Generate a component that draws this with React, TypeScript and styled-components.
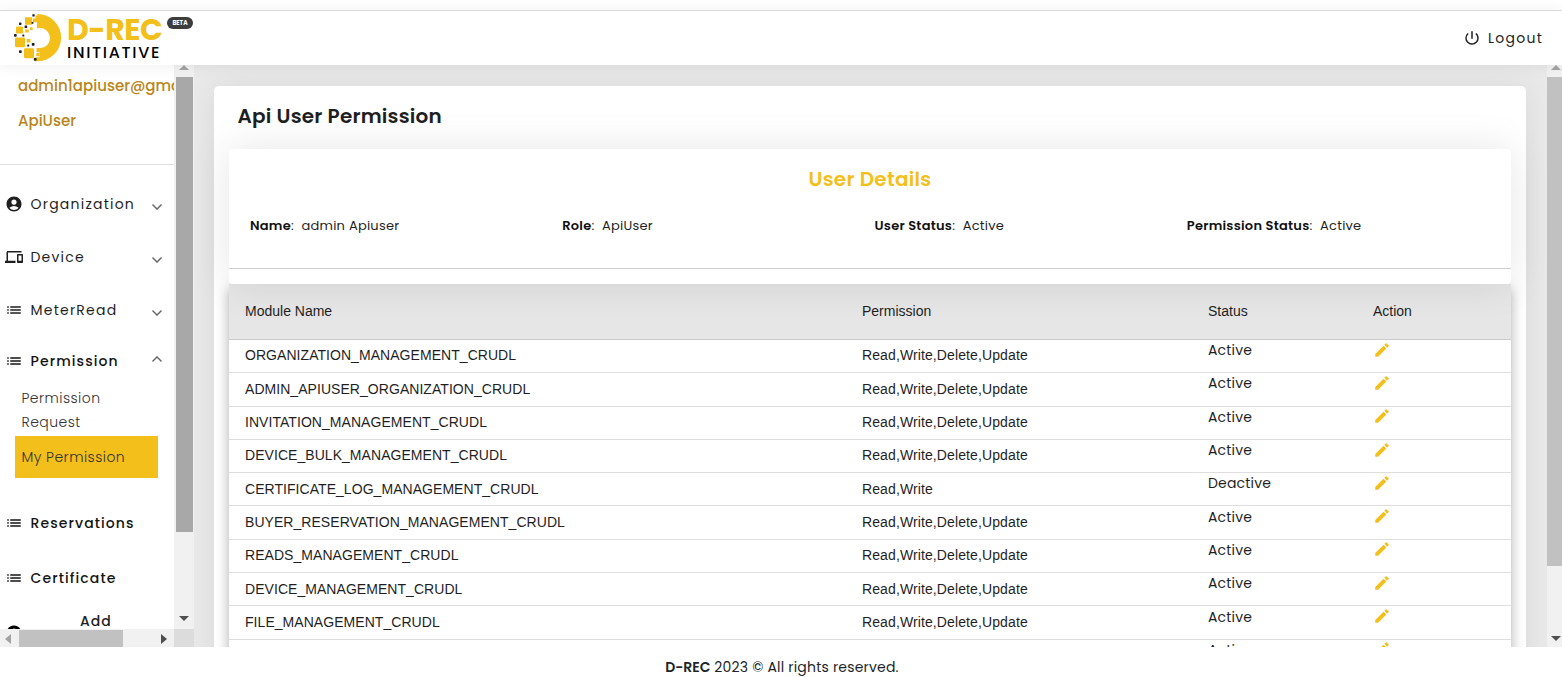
import React from 'react';
import styled, { createGlobalStyle } from 'styled-components';
import { MdAccountCircle, MdDevices, MdEdit, MdList, MdPowerSettingsNew } from 'react-icons/md';

const GlobalStyle = createGlobalStyle`
  *, *::before, *::after { box-sizing: border-box; }
  body {
    margin: 0;
    background: #fff;
    color: #1f1f1f;
    font-family: Poppins, Inter, 'Open Sans', sans-serif;
    overflow: hidden;
  }
`;

const GOLD = '#f3bf1a';

const Page = styled.div`
  display: flex;
  flex-direction: column;
  height: 677px;
  padding-top: 10px;
  overflow: hidden;
`;

const Header = styled.header`
  position: relative;
  z-index: 2;
  flex: none;
  display: flex;
  justify-content: space-between;
  height: 55px;
  padding: 0 19px 0 13px;
  background: #fff;
  border-top: 1px solid #dadada;
  box-shadow: 0 1px 14px rgba(0, 0, 0, 0.07);
`;

const Brand = styled.div`
  display: flex;
  align-items: flex-start;
`;

const BrandMark = styled.svg`
  display: block;
  width: 49px;
  height: 49px;
  margin-top: 2px;
`;

const BrandText = styled.div`
  display: flex;
  flex-direction: column;
  width: 99px;
  margin: 4px 0 0 5px;
  white-space: nowrap;
`;

const BrandName = styled.span`
  height: 30px;
  line-height: 30px;
  font-size: 30px;
  font-weight: 700;
  letter-spacing: -0.5px;
  color: ${GOLD};
`;

const BrandSub = styled.span`
  height: 16px;
  line-height: 16px;
  font-size: 16px;
  font-weight: 500;
  letter-spacing: 1.7px;
  color: #000;
`;

const Beta = styled.span`
  width: 26px;
  height: 12px;
  margin: 6px 0 0 1px;
  border-radius: 6px;
  background: #3d3d3d;
  color: #fff;
  font-size: 6px;
  font-weight: 700;
  line-height: 12px;
  text-align: center;
`;

const Logout = styled.div`
  display: flex;
  align-items: center;
  gap: 7px;
  height: 54px;
  font-size: 14px;
  letter-spacing: 1.25px;

  svg {
    width: 18px;
    height: 18px;
  }
`;

const Body = styled.div`
  flex: none;
  display: flex;
  height: 582px;
`;

const Sidebar = styled.aside`
  flex: none;
  display: grid;
  grid-template-columns: 174px 20px;
  grid-template-rows: 564px 18px;
  width: 194px;
  background: #fff;
`;

const SideContent = styled.div`
  overflow: hidden;
`;

const UserBlock = styled.div`
  display: flex;
  flex-direction: column;
  gap: 10px;
  height: 100px;
  padding: 8px 0 0 18px;
  border-bottom: 1px solid #dedede;
  color: #b8861b;
  font-size: 15px;
  font-weight: 500;
  line-height: 25px;
  white-space: nowrap;
`;

const Nav = styled.nav`
  display: flex;
  flex-direction: column;
  padding-top: 13px;
`;

const NavItem = styled.div<{ $h: number; $strong?: boolean }>`
  flex: none;
  display: flex;
  align-items: center;
  height: ${(p) => p.$h}px;
  padding: 0 12px 0 5px;
  color: ${(p) => (p.$strong ? '#141414' : '#1f1f1f')};
  font-size: 14px;
  font-weight: ${(p) => (p.$strong ? 500 : 400)};
  letter-spacing: ${(p) => (p.$strong ? 1.1 : 1.22)}px;
  white-space: nowrap;
`;

const NavIcon = styled.span`
  display: flex;
  margin: -1px 7.5px 0 0;

  svg {
    width: 18px;
    height: 18px;
  }
`;

const Chevron = styled.svg<{ $up?: boolean }>`
  width: 10px;
  height: 6px;
  margin: ${(p) => (p.$up ? '0 0 5px auto' : '5px 0 0 auto')};
  transform: ${(p) => (p.$up ? 'rotate(180deg)' : 'none')};
`;

const SubMenu = styled.div`
  display: flex;
  flex-direction: column;
  gap: 2px;
  padding: 0 16px 18px 15px;
  color: #333;
  font-size: 14px;
  font-weight: 300;
  letter-spacing: 0.45px;
`;

const SubItem = styled.div<{ $active?: boolean }>`
  padding: ${(p) => (p.$active ? '9px 6.5px' : '0 6.5px')};
  background: ${(p) => (p.$active ? GOLD : 'transparent')};
  line-height: 24px;
`;

const AddItem = styled.div`
  flex: none;
  display: flex;
  height: 40px;
  padding-left: 5px;
  font-size: 14px;
  font-weight: 500;
  letter-spacing: 1px;
  line-height: 31px;

  svg {
    flex: none;
    width: 18px;
    height: 18px;
    margin: 18px 57px 0 0;
    color: #000;
  }
`;

const VScroll = styled.div<{ $w: number }>`
  flex: none;
  display: flex;
  flex-direction: column;
  align-items: center;
  width: ${(p) => p.$w}px;
  height: 100%;
  background: #f1f1f1;
`;

const VThumb = styled.div<{ $h: number; $w: number; $color: string }>`
  width: ${(p) => p.$w}px;
  height: ${(p) => p.$h}px;
  background: ${(p) => p.$color};
`;

const Arrow = styled.svg<{ $m: string }>`
  flex: none;
  margin: ${(p) => p.$m};
`;

const HScroll = styled.div`
  display: flex;
  align-items: center;
  justify-content: space-between;
  padding: 1px 7px 0 5px;
  background: #f1f1f1;
`;

const HThumb = styled.div`
  width: 104px;
  height: 17px;
  margin: 0 auto 0 8px;
  background: #c1c1c1;
`;

const Corner = styled.div`
  background: #dcdcdc;
`;

const Main = styled.main`
  flex: 1;
  padding: 21px 21px 0 20px;
  overflow: hidden;
  background: #e9e9e9;
`;

const Card = styled.section`
  height: 640px;
  padding: 15px 15px 0;
  border-radius: 5px;
  background: #fff;
  box-shadow: 0 0 30px rgba(0, 0, 0, 0.07);
`;

const CardTitle = styled.h1`
  height: 48px;
  margin: 0;
  padding-left: 8.5px;
  font-size: 20px;
  font-weight: 600;
  line-height: 31px;
  letter-spacing: 0.2px;
`;

const Details = styled.div`
  position: relative;
  z-index: 1;
  height: 135px;
  border-radius: 4px;
  background: #fff;
  box-shadow: 0 0 40px rgba(0, 0, 0, 0.1);
`;

const DetailsTitle = styled.h2`
  height: 62px;
  margin: 0;
  color: ${GOLD};
  font-size: 20px;
  font-weight: 600;
  line-height: 61px;
  letter-spacing: 0.25px;
  text-align: center;
`;

const Fields = styled.div`
  display: grid;
  grid-template-columns: repeat(4, 1fr);
  height: 58px;
  padding: 5px 12px 0 21px;
  border-bottom: 1px solid #cfcfcf;
  font-size: 13px;
  letter-spacing: 0.24px;
  line-height: 20px;
`;

const Field = styled.div`
  white-space: nowrap;
`;

const FieldLabel = styled.span`
  color: #111;
  font-weight: 600;
`;

const FieldValue = styled.span`
  margin-left: 7.5px;
`;

const Table = styled.div`
  background: #fff;
  font-family: 'Liberation Sans', Arial, sans-serif;
  font-size: 14px;
  box-shadow: 0 5px 5px -3px rgba(0, 0, 0, 0.2), 0 8px 10px 1px rgba(0, 0, 0, 0.14),
    0 3px 14px 2px rgba(0, 0, 0, 0.12);
`;

const Row = styled.div<{ $head?: boolean }>`
  display: grid;
  grid-template-columns: 617px 346px 165px 1fr;
  align-items: center;
  height: ${(p) => (p.$head ? '56px' : '33.3px')};
  padding-left: 16px;
  background: ${(p) => (p.$head ? '#e6e6e6' : '#fff')};
  border-bottom: 1px solid ${(p) => (p.$head ? '#cbcbcb' : '#dedede')};
`;

const Cell = styled.span<{ $ls?: number }>`
  padding-bottom: ${(p) => (p.$ls ? 1.4 : 2)}px;
  letter-spacing: ${(p) => p.$ls ?? 0}px;
`;

const StatusCell = styled.span`
  padding-bottom: 11px;
  font-family: Poppins, Inter, sans-serif;
  font-size: 14px;
  letter-spacing: 0.18px;
`;

const ActionCell = styled.span`
  display: flex;
  padding-bottom: 13px;
  color: ${GOLD};

  svg {
    width: 18px;
    height: 18px;
  }
`;

const Footer = styled.footer`
  position: relative;
  height: 30px;
  padding-left: 2px;
  line-height: 41px;
  background: #fff;
  color: #212529;
  font-size: 14px;
  letter-spacing: 0.2px;
  text-align: center;

  b {
    font-weight: 600;
    letter-spacing: -0.05px;
  }
`;

const Logo = () => (
  <BrandMark viewBox="13 13 49 49">
    <g fill={GOLD}>
      <path d="M35.5 15.5h2V14a23.5 23.5 0 0 1 0 47.3h-2v-4h4v-5h-3v-4.3h2a10 10 0 1 0 0-19.8h-1.5v-6h-4v-3.6h2.5z" />
      <rect x="25" y="17.3" width="7.2" height="7.4" rx="1" />
      <rect x="16" y="26.6" width="7" height="6.8" rx="1" />
      <rect x="15" y="37.6" width="10" height="9.6" rx="1.2" />
      <rect x="24" y="48.3" width="10" height="10" rx="1.2" />
      <rect x="30" y="27.3" width="2.7" height="2.7" rx=".5" />
      <rect x="25.2" y="29.4" width="3.5" height="3.1" rx=".5" />
      <rect x="26.8" y="39" width="3.6" height="3.6" rx=".5" />
      <rect x="36.2" y="53" width="3.2" height="3.2" rx=".4" />
    </g>
    <g fill="#222">
      <rect x="32.3" y="14.3" width="2.4" height="2.2" rx=".6" />
      <rect x="19" y="22.6" width="2.4" height="2.4" rx=".6" />
      <rect x="24.6" y="25.4" width="2.6" height="2.6" rx=".6" />
      <rect x="31.6" y="22" width="1.8" height="1.8" rx=".4" />
      <rect x="14" y="34" width="2.7" height="2.7" rx=".7" />
      <rect x="22.3" y="34.5" width="2" height="2" rx=".5" />
      <rect x="27.2" y="44.6" width="2" height="2" rx=".5" />
      <rect x="31.8" y="43" width="2.7" height="2.7" rx=".6" />
      <rect x="19" y="50.2" width="2.7" height="2.8" rx=".7" />
      <rect x="33.8" y="58" width="2.8" height="2.8" rx=".7" />
    </g>
  </BrandMark>
);

const Caret = ({ up }: { up?: boolean }) => (
  <Chevron $up={up} viewBox="0 0 10 6">
    <path d="M.5.6 5 5.1 9.5.6" fill="none" stroke="#666" strokeWidth="1.4" />
  </Chevron>
);

const UpArrow = ({ m }: { m: string }) => (
  <Arrow $m={m} width="10" height="5" viewBox="0 0 10 5">
    <path d="M0 5 5 0l5 5z" fill="#a3a3a3" />
  </Arrow>
);

const DownArrow = ({ m }: { m: string }) => (
  <Arrow $m={m} width="10" height="5" viewBox="0 0 10 5">
    <path d="M0 0h10L5 5z" fill="#505050" />
  </Arrow>
);

const fields = [
  { label: 'Name', value: 'admin Apiuser' },
  { label: 'Role', value: 'ApiUser' },
  { label: 'User Status', value: 'Active' },
  { label: 'Permission Status', value: 'Active' },
];

const FULL = 'Read,Write,Delete,Update';

const rows = [
  ['ORGANIZATION_MANAGEMENT_CRUDL', FULL, 'Active'],
  ['ADMIN_APIUSER_ORGANIZATION_CRUDL', FULL, 'Active'],
  ['INVITATION_MANAGEMENT_CRUDL', FULL, 'Active'],
  ['DEVICE_BULK_MANAGEMENT_CRUDL', FULL, 'Active'],
  ['CERTIFICATE_LOG_MANAGEMENT_CRUDL', 'Read,Write', 'Deactive'],
  ['BUYER_RESERVATION_MANAGEMENT_CRUDL', FULL, 'Active'],
  ['READS_MANAGEMENT_CRUDL', FULL, 'Active'],
  ['DEVICE_MANAGEMENT_CRUDL', FULL, 'Active'],
  ['FILE_MANAGEMENT_CRUDL', FULL, 'Active'],
  ['', '', 'Active'],
];

export default function App() {
  return (
    <>
      <GlobalStyle />
      <Page>
        <Header>
          <Brand>
            <Logo />
            <BrandText>
              <BrandName>D-REC</BrandName>
              <BrandSub>INITIATIVE</BrandSub>
            </BrandText>
            <Beta>BETA</Beta>
          </Brand>
          <Logout>
            <MdPowerSettingsNew />
            <span>Logout</span>
          </Logout>
        </Header>
        <Body>
          <Sidebar>
            <SideContent>
              <UserBlock>
                <span>admin1apiuser@gmail.com</span>
                <span>ApiUser</span>
              </UserBlock>
              <Nav>
                <NavItem $h={53}>
                  <NavIcon><MdAccountCircle /></NavIcon>
                  Organization
                  <Caret />
                </NavItem>
                <NavItem $h={53}>
                  <NavIcon><MdDevices /></NavIcon>
                  Device
                  <Caret />
                </NavItem>
                <NavItem $h={52}>
                  <NavIcon><MdList /></NavIcon>
                  MeterRead
                  <Caret />
                </NavItem>
                <NavItem $h={50} $strong>
                  <NavIcon><MdList /></NavIcon>
                  Permission
                  <Caret up />
                </NavItem>
                <SubMenu>
                  <SubItem>Permission Request</SubItem>
                  <SubItem $active>My Permission</SubItem>
                </SubMenu>
                <NavItem $h={55} $strong>
                  <NavIcon><MdList /></NavIcon>
                  Reservations
                </NavItem>
                <NavItem $h={55} $strong>
                  <NavIcon><MdList /></NavIcon>
                  Certificate
                </NavItem>
                <AddItem>
                  <MdAccountCircle />
                  Add
                </AddItem>
              </Nav>
            </SideContent>
            <VScroll $w={20}>
              <UpArrow m="0 0 7px" />
              <VThumb $h={455} $w={17} $color="#a8a8a8" />
              <DownArrow m="auto 0 8px" />
            </VScroll>
            <HScroll>
              <svg width="6" height="10" viewBox="0 0 6 10">
                <path d="M6 0v10L0 5z" fill="#a3a3a3" />
              </svg>
              <HThumb />
              <svg width="6" height="10" viewBox="0 0 6 10">
                <path d="M0 0v10l6-5z" fill="#505050" />
              </svg>
            </HScroll>
            <Corner />
          </Sidebar>
          <Main>
            <Card>
              <CardTitle>Api User Permission</CardTitle>
              <Details>
                <DetailsTitle>User Details</DetailsTitle>
                <Fields>
                  {fields.map((f) => (
                    <Field key={f.label}>
                      <FieldLabel>{f.label}</FieldLabel>:
                      <FieldValue>{f.value}</FieldValue>
                    </Field>
                  ))}
                </Fields>
              </Details>
              <Table>
                <Row $head>
                  <Cell>Module Name</Cell>
                  <Cell>Permission</Cell>
                  <Cell>Status</Cell>
                  <Cell>Action</Cell>
                </Row>
                {rows.map(([name, permission, status], i) => (
                  <Row key={i}>
                    <Cell $ls={0.05}>{name}</Cell>
                    <Cell $ls={0.11}>{permission}</Cell>
                    <StatusCell>{status}</StatusCell>
                    <ActionCell><MdEdit /></ActionCell>
                  </Row>
                ))}
              </Table>
            </Card>
          </Main>
          <VScroll $w={15}>
            <UpArrow m="0 0 7px 2px" />
            <VThumb $h={489} $w={15} $color="#c1c1c1" />
            <DownArrow m="auto 0 6px 2px" />
          </VScroll>
        </Body>
        <Footer>
          <b>D-REC</b> 2023 © All rights reserved.
        </Footer>
      </Page>
    </>
  );
}
